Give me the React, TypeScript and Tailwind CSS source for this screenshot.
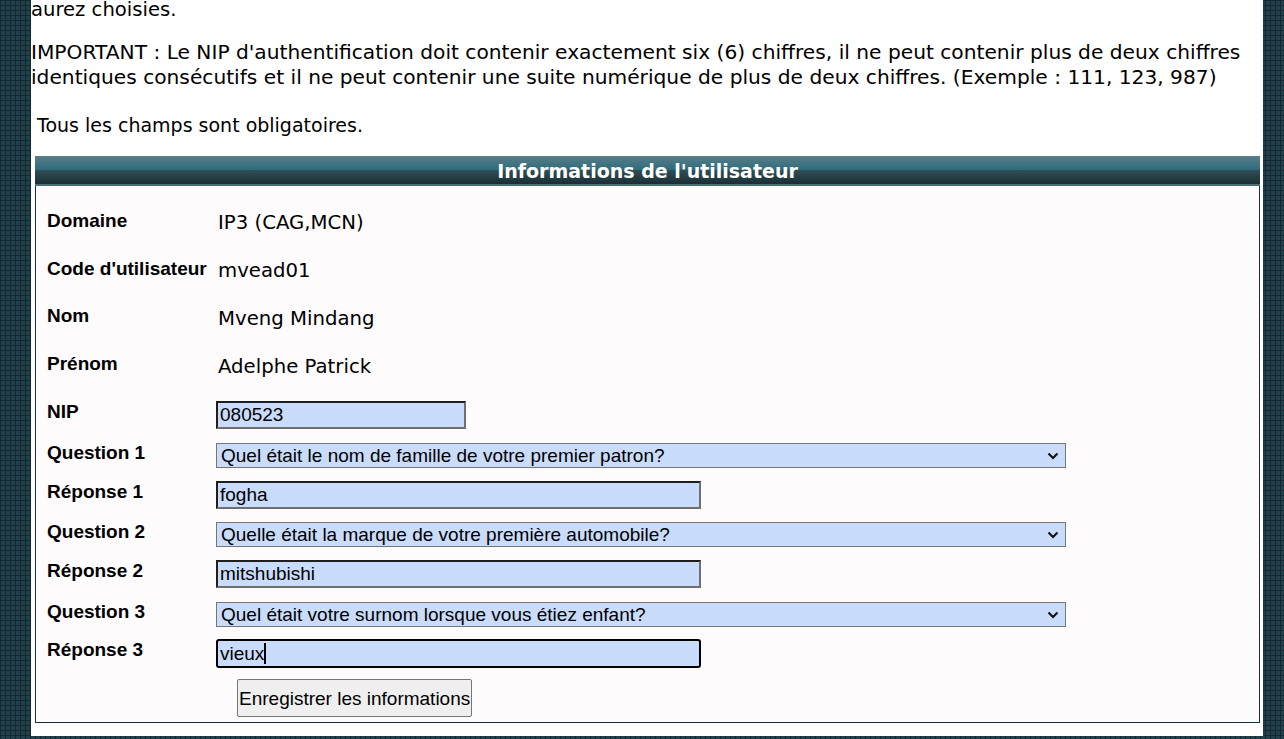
import { useState } from 'react';

type Field = {
    label: string;
    kind: 'text' | 'input' | 'select';
    value: string;
    row: string;
    offset: string;
    width?: string;
    focused?: boolean;
};

const QUESTIONS = [
    'Quel était le nom de famille de votre premier patron?',
    'Quelle était la marque de votre première automobile?',
    'Quel était votre surnom lorsque vous étiez enfant?',
];

const FIELDS: Field[] = [
    { label: 'Domaine', kind: 'text', value: 'IP3 (CAG,MCN)', row: 'h-[48px]', offset: 'mt-[2px]' },
    { label: "Code d'utilisateur", kind: 'text', value: 'mvead01', row: 'h-[47px]', offset: 'mt-[2px]' },
    { label: 'Nom', kind: 'text', value: 'Mveng Mindang', row: 'h-[48px]', offset: 'mt-[3px]' },
    { label: 'Prénom', kind: 'text', value: 'Adelphe Patrick', row: 'h-[48px]', offset: 'mt-[3px]' },
    { label: 'NIP', kind: 'input', value: '080523', row: 'h-[41px]', offset: 'mt-0', width: 'w-[250px]' },
    { label: 'Question 1', kind: 'select', value: QUESTIONS[0], row: 'h-[39px]', offset: 'mt-[1px]' },
    { label: 'Réponse 1', kind: 'input', value: 'fogha', row: 'h-[40px]', offset: 'mt-0', width: 'w-[485px]' },
    { label: 'Question 2', kind: 'select', value: QUESTIONS[1], row: 'h-[39px]', offset: 'mt-[1px]' },
    { label: 'Réponse 2', kind: 'input', value: 'mitshubishi', row: 'h-[41px]', offset: 'mt-0', width: 'w-[485px]' },
    { label: 'Question 3', kind: 'select', value: QUESTIONS[2], row: 'h-[38px]', offset: 'mt-[1px]' },
    { label: 'Réponse 3', kind: 'input', value: 'vieux', row: 'h-[40px]', offset: 'mt-0', width: 'w-[485px]', focused: true },
];

function Chevron() {
    return (
        <svg width="12" height="8" viewBox="0 0 12 8" className="pointer-events-none absolute right-[7px] top-[9px]">
            <path d="M1.5 1.5 L6 6 L10.5 1.5" fill="none" stroke="#111" strokeWidth="2.2" />
        </svg>
    );
}

function FieldControl({ field }: { field: Field }) {
    const [value, setValue] = useState(field.value);

    if (field.kind === 'text') {
        return <span className={`${field.offset} ml-[2px] leading-[22px] font-['DejaVu_Sans',sans-serif] text-[19.7px] text-black`}>{value}</span>;
    }

    if (field.kind === 'select') {
        return (
            <div className={`${field.offset} relative w-[850px]`}>
                <select
                    value={value}
                    onChange={(e) => setValue(e.target.value)}
                    className="appearance-none w-full h-[25px] border border-[#767676] bg-[#cadcfc] pl-[4px] text-[19px] leading-[21px] text-black font-['Liberation_Sans',Arial,sans-serif] outline-none"
                >
                    {QUESTIONS.map((q) => (
                        <option key={q} value={q}>{q}</option>
                    ))}
                </select>
                <Chevron />
            </div>
        );
    }

    return (
        <div className={`${field.offset} relative ${field.width}`}>
            <input
                value={value}
                onChange={(e) => setValue(e.target.value)}
                className={
                    field.focused
                        ? "w-full h-[29px] rounded-[3px] border-2 border-black bg-[#cadcfc] px-[2px] text-[19px] text-black font-['Liberation_Sans',Arial,sans-serif] outline-none"
                        : "w-full h-[28px] border-2 border-t-[#1f1f1f] border-l-[#1f1f1f] border-r-[#6f6f6f] border-b-[#6f6f6f] bg-[#cadcfc] px-[2px] text-[19px] text-black font-['Liberation_Sans',Arial,sans-serif] outline-none"
                }
            />
            {field.focused && <span className="absolute left-[48px] top-[4px] h-[21px] w-[2px] bg-black" />}
        </div>
    );
}

export default function App() {
    return (
        <div className="h-[739px] overflow-hidden bg-[#21404c] bg-[image:linear-gradient(90deg,#14272f_1px,transparent_1px),linear-gradient(#14272f_1px,transparent_1px)] bg-size-[5px_5px]">
            <div className="ml-[31px] w-[1232px] min-h-[739px] bg-white text-black font-['DejaVu_Sans',sans-serif] text-[19px] leading-[25px]">
                <p className="-mt-[3px] text-[19.6px]">aurez choisies.</p>
                <p className="mt-[18px] text-[20.2px]">
                    IMPORTANT : Le NIP d'authentification doit contenir exactement six (6) chiffres, il ne peut contenir plus de deux chiffres identiques consécutifs et il ne peut contenir une suite numérique de plus de deux chiffres. (Exemple : 111, 123, 987)
                </p>
                <p className="mt-[23px]">{'\u00a0'}Tous les champs sont obligatoires.</p>

                <div className="mt-[18px] ml-[4px] w-[1225px]">
                    <div className="h-[30px] flex items-center justify-center bg-[image:linear-gradient(to_bottom,#5a7e87_0%,#2e6b7d_46%,#2f4f57_46%,#1b2f35_92%,#4f6d74_92%)] text-white font-bold text-[19px]">
                        Informations de l'utilisateur
                    </div>
                    <div className="border border-t-0 border-[#17303a] bg-[#fdfbfc] pt-[24px] pb-[5px]">
                        {FIELDS.map((f) => (
                            <div key={f.label} className={`flex items-start ${f.row}`}>
                                <div className="w-[180px] shrink-0 pl-[11px] leading-[22px] font-['Liberation_Sans',Arial,sans-serif] font-bold text-[19px]">
                                    {f.label}
                                </div>
                                <FieldControl field={f} />
                            </div>
                        ))}
                        <div className="pl-[201px]">
                            <button className="h-[38px] px-[1px] rounded-[2px] border border-[#767676] bg-[#efefef] text-[19px] text-black font-['Liberation_Sans',Arial,sans-serif]">
                                Enregistrer les informations
                            </button>
                        </div>
                    </div>
                </div>
            </div>
        </div>
    );
}
